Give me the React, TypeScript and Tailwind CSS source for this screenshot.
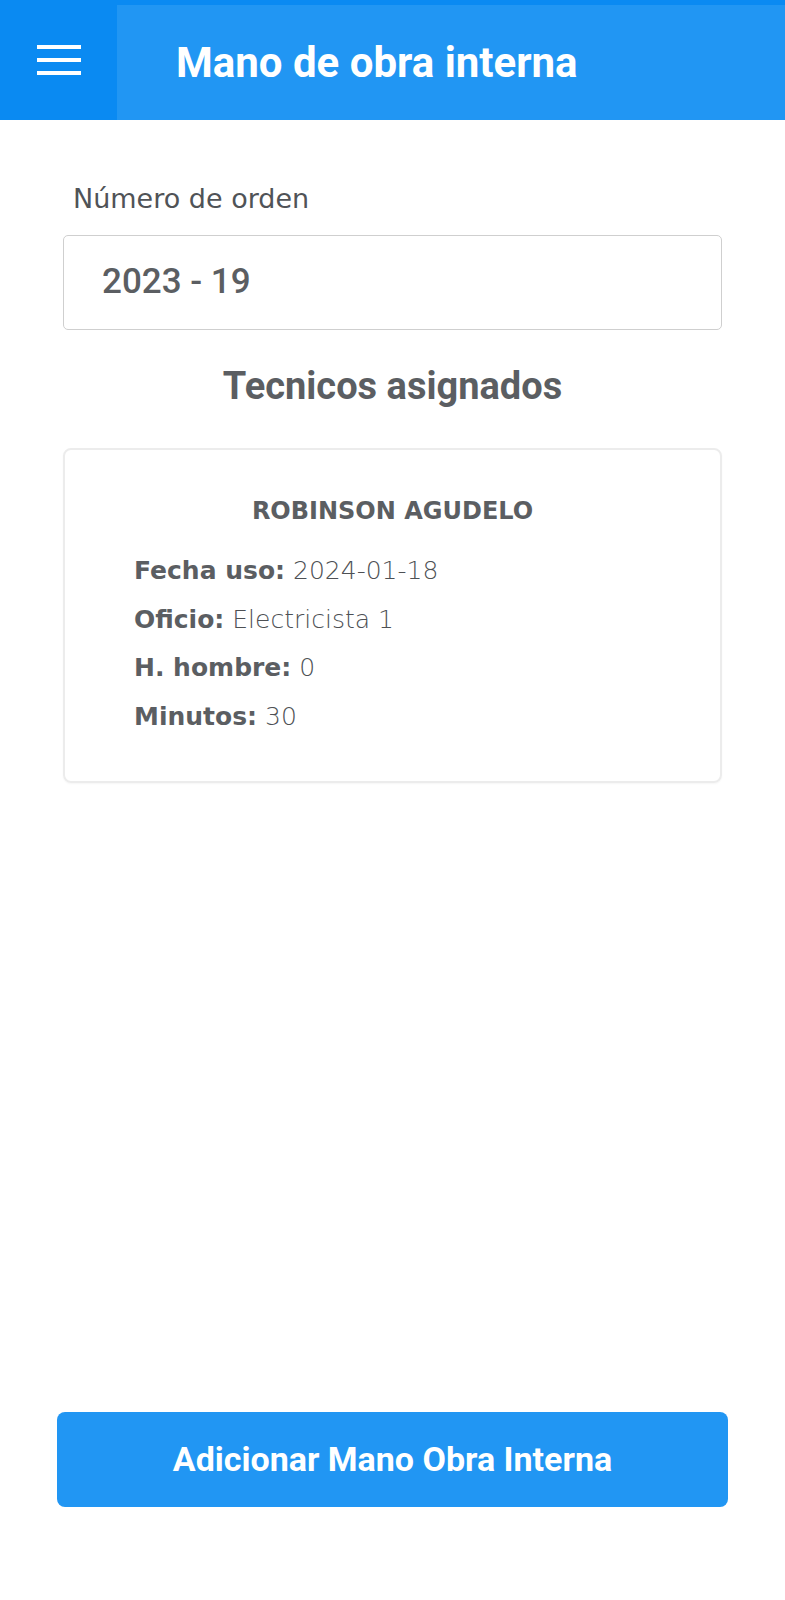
import React from "react";

const rows = [
  { label: "Fecha uso:", value: "2024-01-18" },
  { label: "Oficio:", value: "Electricista 1" },
  { label: "H. hombre:", value: "0" },
  { label: "Minutos:", value: "30" },
];

export default function App() {
  return (
    <div className="flex min-h-[1600px] w-[785px] flex-col bg-white font-['Roboto',sans-serif]">
      {/* header */}
      <header className="flex h-[120px] w-full">
        <div className="flex w-[117px] items-center justify-center bg-[#0a8af2]">
          <div className="flex w-[44px] flex-col gap-[9px]">
            <span className="h-[4px] w-full bg-white" />
            <span className="h-[4px] w-full bg-white" />
            <span className="h-[4px] w-full bg-white" />
          </div>
        </div>
        <div className="flex flex-1 items-center border-t-[5px] border-[#0a8af2] bg-[#2196f3] pl-[59px]">
          <h1 className="text-[42px] font-bold text-white">Mano de obra interna</h1>
        </div>
      </header>

      <main className="flex flex-col px-[63px]">
        <label className="mt-[63px] ml-[10px] font-['DejaVu_Sans',sans-serif] text-[27px] leading-[32px] text-[#505357]">
          Número de orden
        </label>
        <div className="mt-[20px] flex h-[95px] items-center rounded-[5px] border border-[#cfcfcf] pl-[38px]">
          <span className="text-[35px] font-medium text-[#5b5e62]">2023 - 19</span>
        </div>

        <h2 className="mt-[34px] text-center text-[38px] leading-[44px] font-bold text-[#5b5e62]">
          Tecnicos asignados
        </h2>

        <div className="mt-[40px] rounded-[8px] border-2 border-[#ececec] pt-[45px] pb-[40px] pl-[69px] shadow-[0_1px_2px_rgba(0,0,0,0.04)]">
          <p className="pr-[69px] text-center font-['DejaVu_Sans',sans-serif] text-[24px] leading-[32px] font-bold text-[#5b5e62]">
            ROBINSON AGUDELO
          </p>
          <div className="mt-[20px] flex flex-col font-['DejaVu_Sans',sans-serif] text-[25px] leading-[48.5px] text-[#4d5054]">
            {rows.map((r) => (
              <p key={r.label}>
                <span className="font-bold text-[#5b5e62]">{r.label}</span> <span className="font-light">{r.value}</span>
              </p>
            ))}
          </div>
        </div>
      </main>

      <div className="mt-auto px-[57px] pb-[93px]">
        <button className="flex h-[95px] w-full items-center justify-center rounded-[8px] bg-[#2196f3] text-[34px] font-bold text-white">
          Adicionar Mano Obra Interna
        </button>
      </div>
    </div>
  );
}
